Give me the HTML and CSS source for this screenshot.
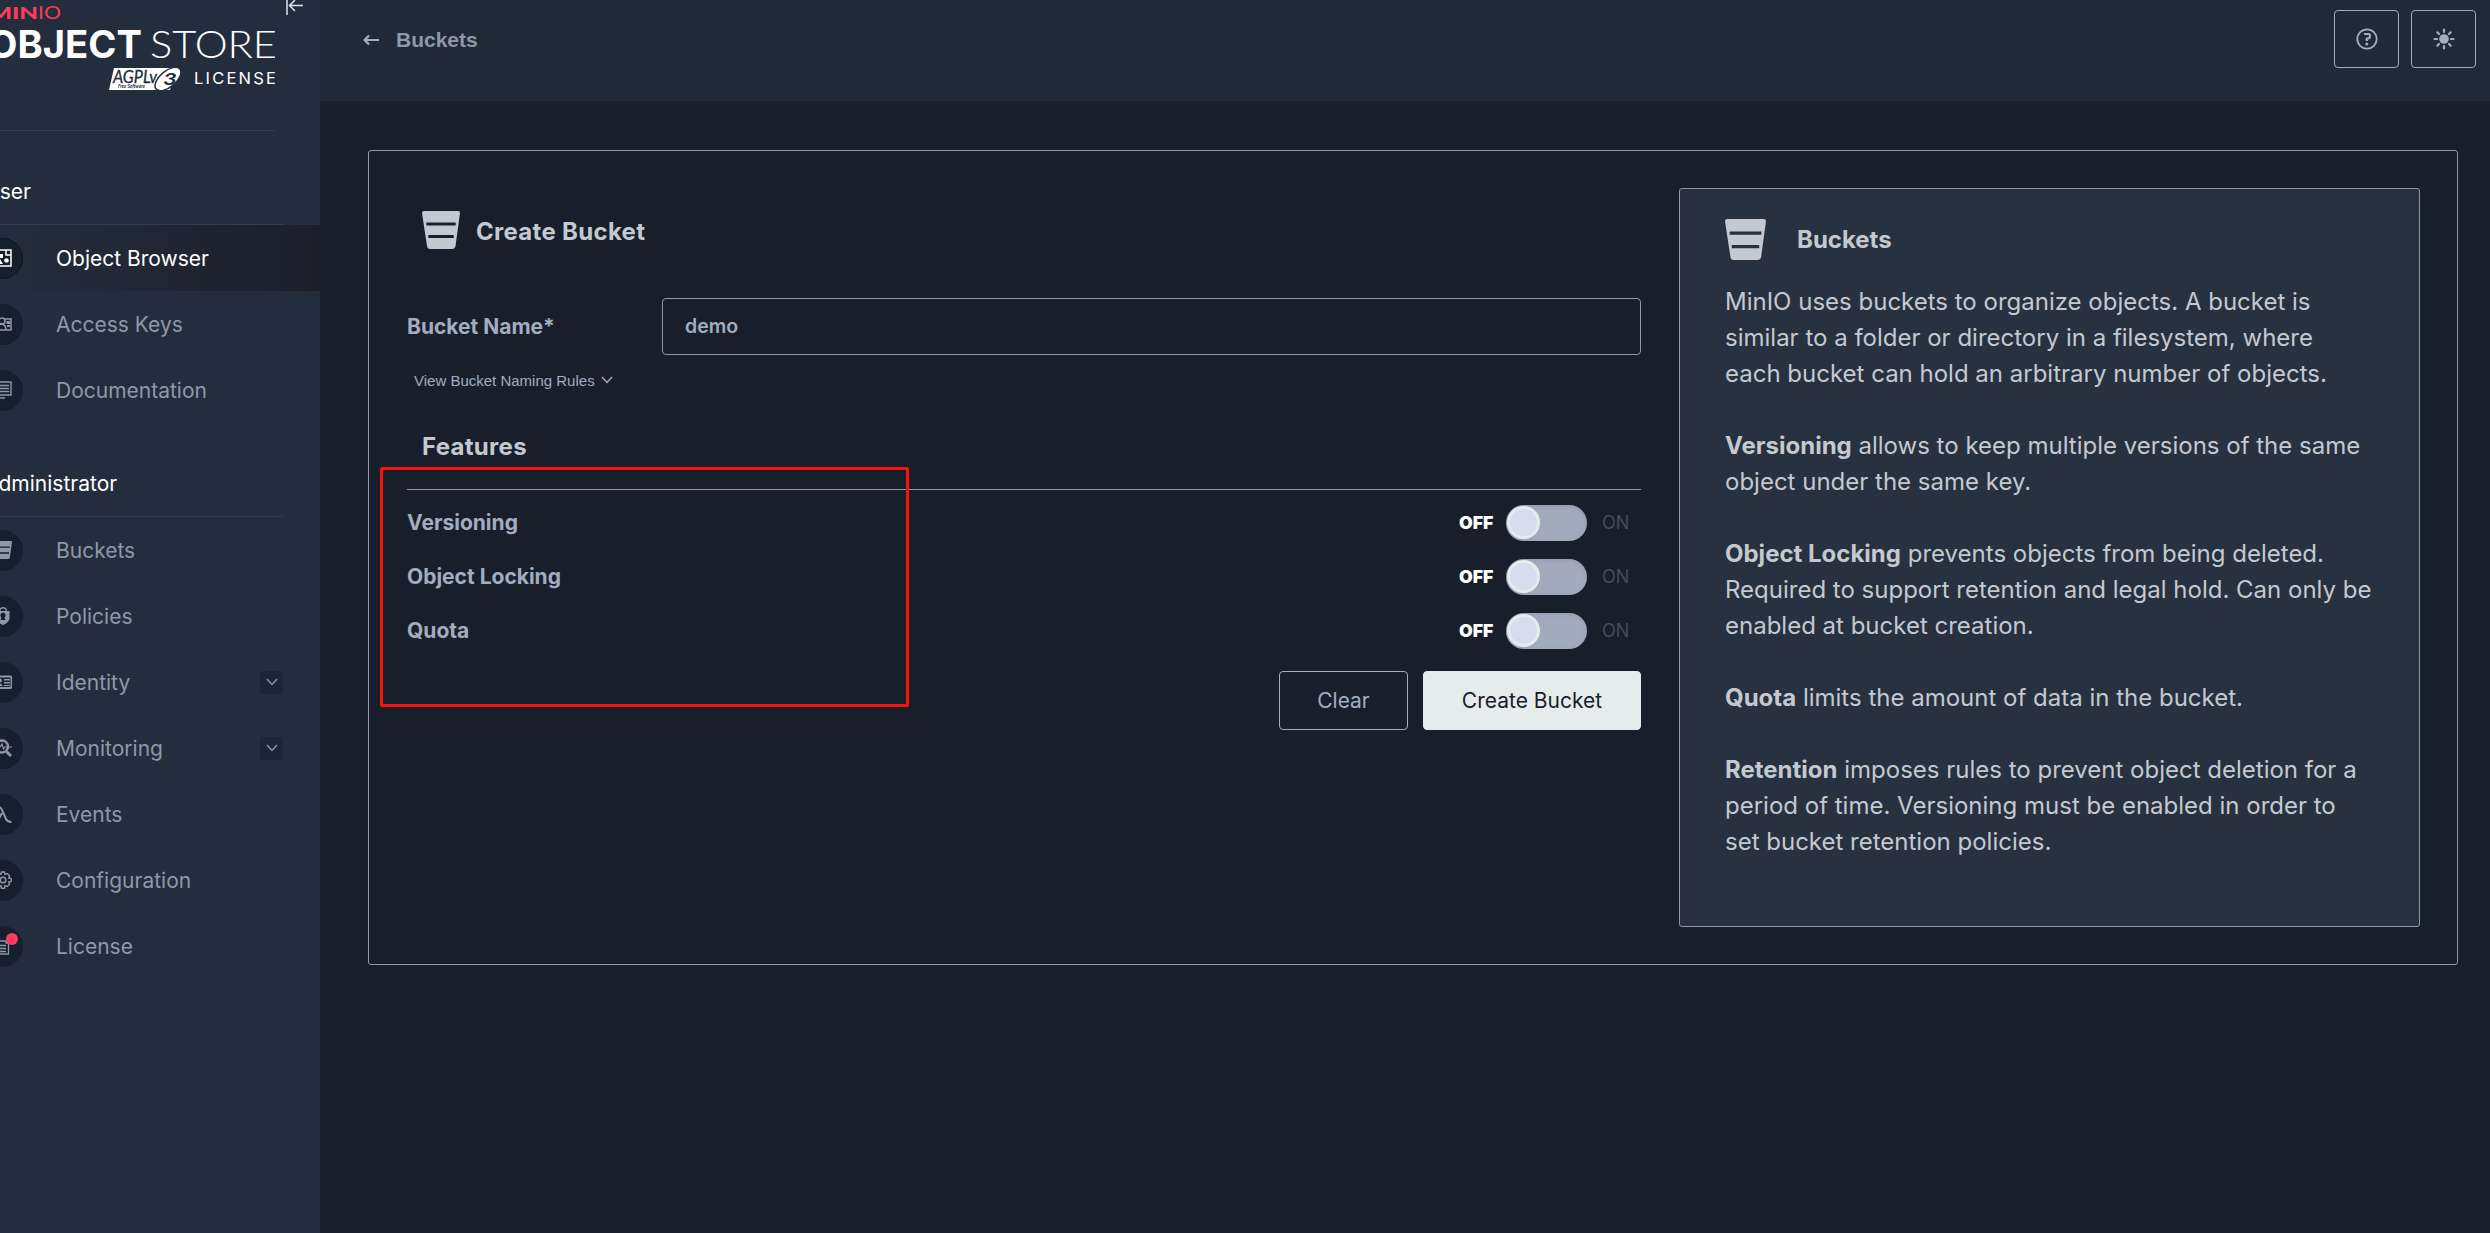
FILE: index.html
```html
<!DOCTYPE html>
<html lang="en">
<head>
    <meta charset="UTF-8">
    <meta name="viewport" content="width=device-width, initial-scale=1.0">
    <title>MinIO Console</title>
    <link rel="stylesheet" href="styles.css">
</head>
<body>
    <svg class="defs" width="0" height="0">
        <symbol id="bucket" viewBox="0 0 38 38">
            <path fill-rule="evenodd" d="M2 0H36Q38 0 38 2L33.500 35Q33 38 30 38H8Q5.500 38 5 35L0 2Q0 0 2 0ZM4.300 11.500V14.500H33.700V11.500ZM6.300 24V27H31.700V24Z"/>
        </symbol>
        <symbol id="chevron" viewBox="0 0 12 8">
            <path d="M1 1L6 6.500L11 1" fill="none" stroke="currentColor" stroke-width="1.400"/>
        </symbol>
    </svg>

    <div class="layout">
        <aside class="sidebar">
            <div class="logo-row">
                <svg class="logo" width="290" height="96" viewBox="-15 0 290 96">
                    <g fill="#ff3b5c">
                        <text class="logo-min" x="-11" y="18.800" textLength="49" lengthAdjust="spacingAndGlyphs">MIN</text>
                        <text class="logo-io" x="38" y="18.800" textLength="23" lengthAdjust="spacingAndGlyphs">IO</text>
                    </g>
                    <text class="logo-object" x="-12" y="57.500" textLength="154" lengthAdjust="spacingAndGlyphs">OBJECT</text>
                    <text class="logo-store" x="150" y="57.500" textLength="127" lengthAdjust="spacingAndGlyphs">STORE</text>
                    <path d="M114 68H176L170 90H109Z" fill="#fff"/>
                    <text class="logo-agpl" x="113" y="83" textLength="44" lengthAdjust="spacingAndGlyphs">AGPLv</text>
                    <text class="logo-free" x="118" y="88" textLength="27" lengthAdjust="spacingAndGlyphs">Free Software</text>
                    <ellipse cx="168" cy="79" rx="15.500" ry="8" transform="rotate(-40 168 79)" fill="#fff" stroke="#242d3d" stroke-width="1.500"/>
                    <text class="logo-three" x="163" y="85" textLength="14" lengthAdjust="spacingAndGlyphs">3</text>
                    <text class="logo-license" x="194" y="83.700" textLength="82">LICENSE</text>
                </svg>
                <svg class="collapse" width="18" height="17" viewBox="0 0 18 17">
                    <path d="M1 0V15M17 5.500H4M9 0L3.500 5.500L9 11" fill="none" stroke="#dfe4ec" stroke-width="1.500"/>
                </svg>
            </div>

            <nav>
                <h2 class="group-title">User</h2>
                <a class="item active">
                    <span class="icon"><svg viewBox="0 0 18 18"><path d="M1 1H17V17H1Z M12 1V6H17" fill="none" stroke="currentColor" stroke-width="1.500"/><rect x="4" y="5" width="5" height="4"/><circle cx="12.500" cy="11.500" r="2.300"/><path d="M3 15L6 10L9 15Z"/></svg></span>
                    <span class="label">Object Browser</span>
                </a>
                <a class="item">
                    <span class="icon"><svg viewBox="0 0 18 18"><g fill="none" stroke="currentColor" stroke-width="1.500"><path d="M11 4H17V15H1V11"/><circle cx="8" cy="6" r="3"/><path d="M3 15Q3 9 8 9Q12 10 12 15"/></g><path d="M12.500 6H16V9H12.500ZM13 10H16V12H13Z"/></svg></span>
                    <span class="label">Access Keys</span>
                </a>
                <a class="item">
                    <span class="icon"><svg viewBox="0 0 18 18"><path d="M1 1H17V14H1ZM4 4.500H15M4 7.500H15M4 10.500H15M4 17H11" fill="none" stroke="currentColor" stroke-width="1.400"/></svg></span>
                    <span class="label">Documentation</span>
                </a>

                <h2 class="group-title admin">Administrator</h2>
                <a class="item">
                    <span class="icon"><svg><use href="#bucket"/></svg></span>
                    <span class="label">Buckets</span>
                </a>
                <a class="item">
                    <span class="icon"><svg viewBox="0 0 18 18"><path fill-rule="evenodd" d="M2.500 4H15.500V12Q14 16 9 18Q4 16 2.500 12ZM9 5.500A2.800 2.800 0 0 0 7.500 10.500L6.500 13H11.500L10.500 10.500A2.800 2.800 0 0 0 9 5.500Z"/><path d="M6 4V2Q9 -.5 12 2V4" fill="none" stroke="currentColor" stroke-width="1.300"/></svg></span>
                    <span class="label">Policies</span>
                </a>
                <a class="item">
                    <span class="icon"><svg viewBox="0 0 18 18"><rect x="1" y="3.500" width="16.500" height="11.500" rx="1.500" fill="none" stroke="currentColor" stroke-width="1.800"/><circle cx="6" cy="7.500" r="2"/><path d="M3 13Q6 8 9 13ZM10 6H16V7.500H10ZM10 9H16V10.500H10ZM10 12H16V13H10Z"/></svg></span>
                    <span class="label">Identity</span>
                    <span class="expand"><svg width="12" height="8"><use href="#chevron"/></svg></span>
                </a>
                <a class="item">
                    <span class="icon"><svg viewBox="0 0 18 18"><g fill="none" stroke="currentColor"><circle cx="8" cy="7.500" r="6" stroke-width="2.400"/><path d="M12.500 12.500L17 17" stroke-width="3"/><path d="M3 8H6L8 5L9.500 10L11 8H18" stroke-width="1.200"/></g></svg></span>
                    <span class="label">Monitoring</span>
                    <span class="expand"><svg width="12" height="8"><use href="#chevron"/></svg></span>
                </a>
                <a class="item">
                    <span class="icon"><svg viewBox="0 0 18 18"><path d="M2 2H5Q7 2 8 5L12 14Q13.500 17 17.500 17M8 8L3 17" fill="none" stroke="currentColor" stroke-width="2"/></svg></span>
                    <span class="label">Events</span>
                </a>
                <a class="item">
                    <span class="icon"><svg viewBox="0 0 18 18"><g fill="none" stroke="currentColor" stroke-width="1.400"><circle cx="9" cy="9" r="2.800"/><path d="M7.500 1H10.500L11 3.300L13.300 2.500L15.500 4.700L14.700 7L17.200 7.500V10.500L14.700 11L15.500 13.300L13.300 15.500L11 14.700L10.500 17.200H7.500L7 14.700L4.700 15.500L2.500 13.300L3.300 11L.8 10.500V7.500L3.300 7L2.500 4.700L4.700 2.500L7 3.300Z"/></g></svg></span>
                    <span class="label">Configuration</span>
                </a>
                <a class="item">
                    <span class="icon"><svg viewBox="0 0 18 18"><path d="M3 4H12V6H14.500V17H1V7ZM4 8.500H12M4 11.500H12M4 14.500H12" fill="none" stroke="currentColor" stroke-width="1.300"/></svg><i class="badge"></i></span>
                    <span class="label">License</span>
                </a>
            </nav>
        </aside>

        <main class="main">
            <header class="header">
                <a class="back">
                    <svg width="17" height="12" viewBox="0 0 17 12"><path d="M16 6H1.500M6 1.500L1.500 6L6 10.500" fill="none" stroke="currentColor" stroke-width="2.200"/></svg>
                    Buckets
                </a>
                <div class="actions">
                    <button class="icon-button">
                        <svg width="22" height="22" viewBox="0 0 22 22"><g fill="none" stroke="currentColor"><circle cx="11" cy="11" r="9.700" stroke-width="1.800"/><path d="M8 6H12.500Q14 6 14 7.500V8.500Q14 10 12.500 10.300L10.800 10.700V13" stroke-width="2.200"/></g><circle cx="10.800" cy="16" r="1.500"/></svg>
                    </button>
                    <button class="icon-button">
                        <svg width="22" height="22" viewBox="0 0 22 22"><circle cx="11" cy="11" r="4.800"/><path d="M11 1.500V4M11 18V20.500M1.500 11H4M18 11H20.500M4.300 4.300L6 6M16 16L17.700 17.700M4.300 17.700L6 16M16 6L17.700 4.300" stroke="currentColor" stroke-width="2.200" stroke-linecap="round"/></svg>
                    </button>
                </div>
            </header>

            <section class="card">
                <form class="form">
                    <h1 class="form-title"><svg width="38" height="38"><use href="#bucket"/></svg><span>Create Bucket</span></h1>
                    <div class="field">
                        <label for="bucketName">Bucket Name*</label>
                        <input id="bucketName" type="text" value="demo">
                    </div>
                    <div class="rules">View Bucket Naming Rules <svg width="12" height="8"><use href="#chevron"/></svg></div>

                    <h2 class="features-title">Features</h2>
                    <div class="features">
                        <div class="feature">
                            <span class="feature-name">Versioning</span>
                            <div class="switch"><b>OFF</b><span class="track"><i class="knob"></i></span><span class="on">ON</span></div>
                        </div>
                        <div class="feature">
                            <span class="feature-name">Object Locking</span>
                            <div class="switch"><b>OFF</b><span class="track"><i class="knob"></i></span><span class="on">ON</span></div>
                        </div>
                        <div class="feature">
                            <span class="feature-name">Quota</span>
                            <div class="switch"><b>OFF</b><span class="track"><i class="knob"></i></span><span class="on">ON</span></div>
                        </div>
                        <div class="highlight"></div>
                    </div>

                    <div class="buttons">
                        <button type="button" class="btn clear">Clear</button>
                        <button type="button" class="btn create">Create Bucket</button>
                    </div>
                </form>

                <aside class="help">
                    <h2 class="help-title"><svg width="41" height="41"><use href="#bucket"/></svg>Buckets</h2>
                    <p>MinIO uses buckets to organize objects. A bucket is similar to a folder or directory in a filesystem, where each bucket can hold an arbitrary number of objects.</p>
                    <p><b>Versioning</b> allows to keep multiple versions of the same object under the same key.</p>
                    <p><b>Object Locking</b> prevents objects from being deleted. Required to support retention and legal hold. Can only be enabled at bucket creation.</p>
                    <p><b>Quota</b> limits the amount of data in the bucket.</p>
                    <p><b>Retention</b> imposes rules to prevent object deletion for a period of time. Versioning must be enabled in order to set bucket retention policies.</p>
                </aside>
            </section>
        </main>
    </div>
</body>
</html>
```
FILE: styles.css
```css
* {
    box-sizing: border-box;
}
body {
    margin: 0;
    background: #181f2a;
    color: #c4c9d0;
    font-family: Inter, sans-serif;
    font-size: 21px;
    overflow: hidden;
}
h1, h2, p {
    margin: 0;
}
svg {
    fill: currentColor;
    flex: none;
}
.defs {
    display: block;
}
.layout {
    display: flex;
    height: 1233px;
}

/* sidebar */
.sidebar {
    width: 375px;
    margin-left: -55px;
    flex: none;
    background: #242d3d;
}
.logo-row {
    display: flex;
    align-items: flex-start;
    gap: 11px;
    width: 330px;
    height: 131px;
    margin-bottom: 30px;
    padding-left: 40px;
    border-bottom: 1px solid #323c4c;
}
.logo {
    fill: #fff;
    font-family: Lato, sans-serif;
}
.logo-min {
    font: 900 16.5px Lato, sans-serif;
}
.logo-io {
    font: 400 16.5px Lato, sans-serif;
}
.logo-object {
    font: 700 38px Inter, sans-serif;
}
.logo-store {
    font: 300 38px Lato, sans-serif;
}
.logo-license {
    font: 400 16.5px Inter, sans-serif;
}
.logo-agpl {
    font: italic 400 17px Lato, sans-serif;
    fill: #242d3d;
    stroke: #242d3d;
    stroke-width: 0.3px;
}
.logo-free {
    font: italic 700 5px Lato, sans-serif;
    fill: #242d3d;
}
.logo-three {
    font: italic 700 17px Lato, sans-serif;
    fill: #242d3d;
}
.collapse {
    flex: none;
}
.group-title {
    display: flex;
    align-items: center;
    width: 338px;
    height: 64px;
    padding: 0 0 2px 39px;
    border-bottom: 1px solid #323c4c;
    color: #fff;
    font-size: 21px;
    font-weight: 400;
}
.group-title.admin {
    height: 66px;
    margin-top: 28px;
    padding-bottom: 0;
}
.item {
    display: flex;
    align-items: center;
    height: 66px;
    padding: 0 37px;
    color: #8e98a9;
}
.item.active {
    background: linear-gradient(90deg, #242d3d 15%, #1c1f2a);
    color: #fff;
}
.icon {
    display: flex;
    align-items: center;
    justify-content: center;
    position: relative;
    width: 41px;
    height: 41px;
    margin-right: 33px;
    border-radius: 50%;
    background: #161f2e;
}
.active .icon {
    border: 1px solid #0d131d;
}
.icon svg {
    width: 18px;
    height: 18px;
}
.badge {
    position: absolute;
    top: 7px;
    right: 5px;
    width: 12px;
    height: 12px;
    border-radius: 50%;
    background: #ff3b5c;
}
.expand {
    display: flex;
    align-items: center;
    justify-content: center;
    width: 23px;
    height: 23px;
    margin-left: auto;
    border-radius: 3px;
    background: #1e2536;
}

/* header */
.main {
    flex: 1;
}
.header {
    display: flex;
    justify-content: space-between;
    height: 101px;
    padding: 10px 14px 0 43px;
    background: #212936;
}
.back {
    display: flex;
    align-items: center;
    gap: 16px;
    height: 59px;
    color: #8e98a9;
    font: bold 21px "Liberation Sans", Arial, sans-serif;
}
.back svg {
    color: #a3adc0;
}
.actions {
    display: flex;
    gap: 12px;
}
.icon-button {
    display: flex;
    align-items: center;
    justify-content: center;
    width: 65px;
    height: 58px;
    padding: 0;
    border: 1px solid #a0aabb;
    border-radius: 4px;
    background: none;
    color: #a3adc0;
}

/* create bucket */
.card {
    display: flex;
    align-items: flex-start;
    gap: 38px;
    height: 815px;
    margin: 49px 32px 0 48px;
    padding: 37px 37px 0 38px;
    border: 1px solid #8e98a9;
    border-radius: 3px;
}
.form {
    flex: 1;
    padding-top: 23px;
}
.form-title {
    display: flex;
    align-items: center;
    gap: 16px;
    height: 38px;
    margin-bottom: 49px;
    padding-left: 15px;
    font-size: 24px;
    font-weight: 700;
    letter-spacing: 0.3px;
}
.form-title span {
    padding-top: 2px;
}
.form-title svg, .help-title svg {
    color: #c4c8d0;
}
.field {
    display: flex;
    align-items: center;
    color: #a3adc0;
    font-weight: 700;
}
.field label {
    width: 255px;
}
.field input {
    flex: 1;
    height: 57px;
    padding: 0 22px 2px;
    border: 1px solid #8e98a9;
    border-radius: 4px;
    background: none;
    color: #a3adc0;
    font: 600 19.5px Inter, sans-serif;
}
.rules {
    display: flex;
    align-items: center;
    gap: 6px;
    height: 18px;
    margin: 16px 0 1px 7px;
    color: #a3adc0;
    font: 15px "Liberation Sans", Arial, sans-serif;
}
.features-title {
    height: 99px;
    padding: 42px 0 0 15px;
    font-size: 24px;
    font-weight: 700;
    letter-spacing: 0.3px;
}
.features {
    position: relative;
    padding-top: 6px;
    border-top: 1px solid #8e98a9;
}
.feature {
    display: flex;
    align-items: center;
    justify-content: space-between;
    height: 54px;
    color: #a3adc0;
    font-weight: 700;
}
.feature-name {
    padding-bottom: 2px;
    font-size: 21px;
}
.switch {
    display: flex;
    align-items: center;
    width: 182px;
    font-size: 18px;
}
.switch b {
    width: 47px;
    padding-bottom: 1px;
    color: #fff;
    font-size: 17.7px;
}
.track {
    width: 81px;
    height: 36px;
    padding: 1px;
    border-radius: 18px;
    background: #a2abbd;
    box-shadow: inset 0 1px 4px rgba(120, 120, 160, 0.4);
}
.knob {
    display: block;
    width: 33px;
    height: 33px;
    border: 3px solid #e6ebeb;
    border-radius: 50%;
    background: #d5ddee;
}
.on {
    margin-left: 15px;
    padding-bottom: 1px;
    color: #424d5e;
    font-weight: 400;
}
.highlight {
    position: absolute;
    left: -27px;
    top: -23px;
    width: 529px;
    height: 240px;
    border: 3px solid #f51407;
    border-radius: 2px;
}
.buttons {
    display: flex;
    justify-content: flex-end;
    gap: 15px;
    margin-top: 13px;
}
.btn {
    height: 59px;
    padding: 0;
    border: 1px solid #a3adc0;
    border-radius: 4px;
    font: 400 21px Inter, sans-serif;
}
.clear {
    width: 129px;
    background: none;
    color: #a3adc0;
}
.create {
    width: 218px;
    border-color: #e6ebeb;
    background: #e6ebeb;
    color: #181f2a;
}

/* help box */
.help {
    width: 741px;
    height: 739px;
    padding: 30px 44px 0 45px;
    border: 1px solid #8e98a9;
    border-radius: 3px;
    background: #283140;
    font-size: 24px;
    line-height: 36px;
}
.help-title {
    display: flex;
    align-items: center;
    gap: 31px;
    height: 41px;
    margin-bottom: 24px;
    font-size: 24px;
}
.help p {
    margin-bottom: 36px;
}
```
